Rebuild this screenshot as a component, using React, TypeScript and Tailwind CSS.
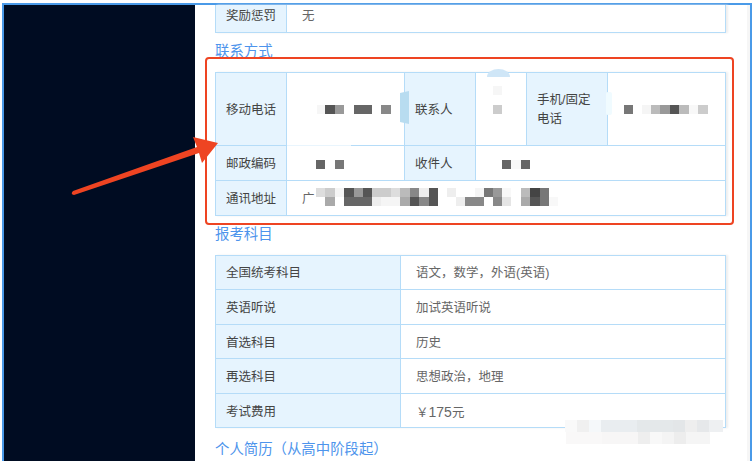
const cjk = { fontFamily: '"Liberation Sans", "Noto Sans CJK SC", sans-serif' };

type R = [number, number, number, number, string];

// mosaic tiles that hide personal data: x, y, width, height, colour
const tiles: R[] = [
  [317, 105, 8, 9, "#f6f6f6"], [325, 105, 10, 9, "#555555"], [335, 105, 9, 9, "#999999"], [354, 105, 18, 9, "#666666"], [381, 105, 10, 9, "#888888"],
  [493, 86, 9, 9, "#f6f6f6"], [493, 105, 9, 9, "#cccccc"],
  [624, 105, 9, 9, "#777777"], [642, 105, 9, 9, "#f5f5f5"], [651, 105, 9, 9, "#bbbbbb"], [660, 105, 10, 9, "#999999"], [670, 105, 9, 9, "#555555"], [679, 105, 10, 9, "#bbbbbb"], [689, 105, 9, 9, "#f8f8f8"], [698, 105, 10, 9, "#cccccc"],
  [316, 160, 9, 9, "#666666"], [335, 160, 9, 9, "#777777"],
  [502, 160, 9, 9, "#666666"], [511, 160, 10, 9, "#f8f8f8"], [521, 160, 9, 9, "#666666"],
  [316, 188, 9, 9, "#dddddd"], [325, 188, 10, 9, "#cccccc"], [335, 188, 9, 9, "#f5f5f5"], [344, 188, 10, 9, "#555555"], [354, 188, 9, 9, "#999999"], [363, 188, 9, 9, "#555555"], [372, 188, 9, 9, "#cccccc"], [381, 188, 10, 9, "#cccccc"], [391, 188, 9, 9, "#dddddd"], [400, 188, 10, 9, "#bbbbbb"], [410, 188, 9, 9, "#888888"], [419, 188, 10, 9, "#eeeeee"], [429, 188, 9, 9, "#555555"], [447, 188, 9, 9, "#eeeeee"], [475, 188, 9, 9, "#f5f5f5"], [484, 188, 9, 9, "#777777"], [493, 188, 9, 9, "#999999"], [502, 188, 9, 9, "#f8f8f8"], [521, 188, 9, 9, "#bbbbbb"], [530, 188, 10, 9, "#444444"], [540, 188, 9, 9, "#777777"],
  [325, 197, 10, 9, "#aaaaaa"], [344, 197, 28, 9, "#666666"], [372, 197, 9, 9, "#eeeeee"], [381, 197, 19, 9, "#f5f5f5"], [400, 197, 10, 9, "#aaaaaa"], [410, 197, 9, 9, "#555555"], [419, 197, 10, 9, "#888888"], [429, 197, 9, 9, "#555555"], [456, 197, 9, 9, "#eeeeee"], [465, 197, 19, 9, "#888888"], [493, 197, 9, 9, "#888888"], [502, 197, 9, 9, "#e5e5e5"], [521, 197, 9, 9, "#aaaaaa"], [530, 197, 10, 9, "#555555"], [540, 197, 9, 9, "#777777"], [549, 197, 9, 9, "#f8f8f8"],
  [565, 420, 12, 12, "#f9f9f9"], [577, 420, 12, 12, "#f0f0f0"], [589, 420, 12, 12, "#f5f8fa"], [601, 420, 36, 12, "#e9edf0"], [637, 420, 36, 12, "#e4e8ea"], [673, 420, 12, 12, "#e3e6e8"], [685, 420, 12, 12, "#eeeeee"], [697, 420, 12, 12, "#e6e8ea"], [709, 420, 14, 12, "#eef0f2"],
  [566, 432, 36, 12, "#f9f8f8"], [602, 432, 36, 12, "#f7f6f6"], [638, 432, 12, 12, "#eeeeee"], [650, 432, 12, 12, "#f8f8f8"], [662, 432, 12, 12, "#f4f4f4"], [674, 432, 12, 12, "#ededed"], [686, 432, 24, 12, "#f5f5f5"],
];

function Label({ children }: { children: React.ReactNode }) {
  return <td className="border border-[#b5dcf8] bg-[#e6f4fe] pl-[10px] pr-1 pt-[3px] text-[#444444]">{children}</td>;
}

function Value({ children, span }: { children?: React.ReactNode; span?: number }) {
  return <td colSpan={span} className="border border-[#b5dcf8] bg-white pl-[15px] pt-[3px] text-[#666666]">{children}</td>;
}

function Heading({ children }: { children: React.ReactNode }) {
  return <h3 className="flex h-[39px] items-center text-[14.4px] font-normal text-[#4d94ec]">{children}</h3>;
}

const subjects: [string, React.ReactNode][] = [
  ["全国统考科目", "语文，数学，外语(英语)"],
  ["英语听说", "加试英语听说"],
  ["首选科目", "历史"],
  ["再选科目", "思想政治，地理"],
  ["考试费用", <>￥<span className="text-[14px]">175</span>元</>],
];

export default function App() {
  return (
    <div className="relative h-[461px] w-[754px] overflow-hidden bg-white pl-[2px] pr-[2px] pt-[3px] text-[12.5px]" style={cjk}>
      <div className="flex h-[458px] border-x-2 border-t-2 border-[#4a9ae8]">
        <aside className="w-[191px] shrink-0 bg-[#000c22]" />
        <main className="flex-1 bg-white pl-5">
          <table className="w-[511px] table-fixed border-collapse shadow-[2px_0_2px_#eeeeee]">
            <colgroup>
              <col className="w-[71px]" />
              <col />
            </colgroup>
            <tbody>
              <tr className="h-[27px]">
                <td className="border border-t-0 border-[#b5dcf8] bg-[#e6f4fe] pb-[3px] pl-[10px] text-[#444444]">奖励惩罚</td>
                <td className="border border-t-0 border-[#b5dcf8] bg-white pb-[3px] pl-[15px] text-[#666666]">无</td>
              </tr>
            </tbody>
          </table>

          <Heading>联系方式</Heading>

          <table className="w-[511px] table-fixed border-collapse shadow-[2px_0_2px_#eeeeee]">
            <colgroup>
              <col className="w-[71px]" />
              <col className="w-[118px]" />
              <col className="w-[71px]" />
              <col className="w-[51px]" />
              <col className="w-[81px]" />
              <col />
            </colgroup>
            <tbody>
              <tr className="h-[73px]">
                <Label>移动电话</Label>
                <Value />
                <Label>联系人</Label>
                <Value />
                <Label><span className="block leading-[19px]">手机/固定<br />电话</span></Label>
                <Value />
              </tr>
              <tr className="h-[35px]">
                <Label>邮政编码</Label>
                <Value />
                <Label>收件人</Label>
                <Value span={3} />
              </tr>
              <tr className="h-[35px]">
                <Label>通讯地址</Label>
                <Value span={5}>广</Value>
              </tr>
            </tbody>
          </table>

          <Heading>报考科目</Heading>

          <table className="w-[511px] table-fixed border-collapse shadow-[2px_0_2px_#eeeeee]">
            <colgroup>
              <col className="w-[185px]" />
              <col />
            </colgroup>
            <tbody>
              {subjects.map(([k, v]) => (
                <tr key={k} className="h-[34.6px]">
                  <Label>{k}</Label>
                  <Value>{v}</Value>
                </tr>
              ))}
            </tbody>
          </table>

          <div className="pt-[2px]">
            <Heading>个人简历（从高中阶段起）</Heading>
          </div>
        </main>
        <div className="w-[3px] shrink-0 bg-[#f6f6f6]" />
      </div>

      <div className="pointer-events-none absolute left-[205px] top-[57px] h-[168px] w-[529px] rounded-[4px] border-2 border-[#ee4422]" />

      <svg className="pointer-events-none absolute left-0 top-0" width="754" height="461" viewBox="0 0 754 461">
        <path d="M487 77a11.5 8 0 0 1 23 0z" fill="#cfe6f7" />
        <path d="M400 93l9-2v33l-9-2z" fill="#b8dcf0" />
        <rect x="606" y="92" width="6" height="23" rx="2" fill="#f0fbff" />
        <rect x="287" y="144" width="64" height="5" fill="#ffffff" opacity="0.7" />
        <path d="M486 146h46v2h-46z" fill="#ffffff" opacity="0.8" />
        {tiles.map(([x, y, w, h, c], i) => (
          <rect key={i} x={x} y={y} width={w} height={h} fill={c} />
        ))}
        <path d="M73 191 L197 147 L193 137 L218 143 L202 163 L199 153 L74 195 Q70 194 73 191Z" fill="#ee4422" />
      </svg>
    </div>
  );
}
